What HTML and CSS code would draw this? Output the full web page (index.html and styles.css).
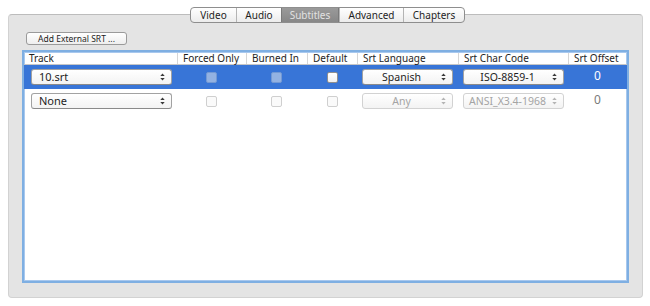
FILE: index.html
```html
<!DOCTYPE html>
<html lang="en">
<head>
    <meta charset="UTF-8">
    <title>Subtitles</title>
    <link rel="stylesheet" href="styles.css">
</head>
<body>
    <div class="page">
        <div class="panel">
            <div class="tabs">
                <div class="tab tab-video">Video</div>
                <div class="tab tab-audio">Audio</div>
                <div class="tab tab-subs selected">Subtitles</div>
                <div class="tab tab-adv">Advanced</div>
                <div class="tab tab-chap">Chapters</div>
            </div>

            <div class="button">Add External SRT ...</div>

            <div class="table">
                <div class="row header">
                    <div class="hcell first">Track</div>
                    <div class="hcell">Forced Only</div>
                    <div class="hcell">Burned In</div>
                    <div class="hcell">Default</div>
                    <div class="hcell">Srt Language</div>
                    <div class="hcell">Srt Char Code</div>
                    <div class="hcell">Srt Offset</div>
                </div>

                <div class="row selected-row">
                    <div class="cell">
                        <div class="popup popup-track">
                            <span class="label">10.srt</span>
                            <svg class="arrows" width="5" height="8" viewBox="0 0 5 8"><polygon points="0.3,3 2.5,0.4 4.7,3"/><polygon points="0.3,5 2.5,7.6 4.7,5"/></svg>
                        </div>
                    </div>
                    <div class="cell center"><span class="check check-dim"></span></div>
                    <div class="cell center"><span class="check check-dim"></span></div>
                    <div class="cell center"><span class="check"></span></div>
                    <div class="cell">
                        <div class="popup popup-lang">
                            <span class="label centered">Spanish</span>
                            <svg class="arrows" width="5" height="8" viewBox="0 0 5 8"><polygon points="0.3,3 2.5,0.4 4.7,3"/><polygon points="0.3,5 2.5,7.6 4.7,5"/></svg>
                        </div>
                    </div>
                    <div class="cell">
                        <div class="popup popup-code">
                            <span class="label centered">ISO-8859-1</span>
                            <svg class="arrows" width="5" height="8" viewBox="0 0 5 8"><polygon points="0.3,3 2.5,0.4 4.7,3"/><polygon points="0.3,5 2.5,7.6 4.7,5"/></svg>
                        </div>
                    </div>
                    <div class="cell offset">0</div>
                </div>

                <div class="row">
                    <div class="cell">
                        <div class="popup popup-track">
                            <span class="label">None</span>
                            <svg class="arrows" width="5" height="8" viewBox="0 0 5 8"><polygon points="0.3,3 2.5,0.4 4.7,3"/><polygon points="0.3,5 2.5,7.6 4.7,5"/></svg>
                        </div>
                    </div>
                    <div class="cell center"><span class="check check-off"></span></div>
                    <div class="cell center"><span class="check check-off"></span></div>
                    <div class="cell center"><span class="check check-off"></span></div>
                    <div class="cell">
                        <div class="popup popup-lang disabled">
                            <span class="label centered">Any</span>
                            <svg class="arrows" width="5" height="8" viewBox="0 0 5 8"><polygon points="0.3,3 2.5,0.4 4.7,3"/><polygon points="0.3,5 2.5,7.6 4.7,5"/></svg>
                        </div>
                    </div>
                    <div class="cell">
                        <div class="popup popup-code disabled">
                            <span class="label centered">ANSI_X3.4-1968</span>
                            <svg class="arrows" width="5" height="8" viewBox="0 0 5 8"><polygon points="0.3,3 2.5,0.4 4.7,3"/><polygon points="0.3,5 2.5,7.6 4.7,5"/></svg>
                        </div>
                    </div>
                    <div class="cell offset dim">0</div>
                </div>
            </div>
        </div>
    </div>
</body>
</html>
```

FILE: styles.css
```css
body {
    margin: 0;
    background: #ffffff;
    font-family: "Noto Sans", "DejaVu Sans", sans-serif;
    color: #1e1e1e;
}
.page {
    padding: 14px 7px 0 8px;
}
.panel {
    width: 635px;
    height: 284px;
    box-sizing: border-box;
    background: #e4e4e4;
    border: 1px solid #d2d2d2;
    border-top-color: #bcbcbc;
    border-radius: 4px;
}

/* segmented tab control */
.tabs {
    display: flex;
    margin: -8px 0 0 181px;
    width: 275px;
    height: 16px;
    box-sizing: border-box;
    border: 1px solid #8e8e8e;
    border-radius: 4px;
    background: linear-gradient(#ffffff, #ececec);
    overflow: hidden;
}
.tab {
    font-size: 10px;
    line-height: 14px;
    text-align: center;
    border-left: 1px solid #b4b4b4;
    box-sizing: border-box;
}
.tab-video { width: 45px; border-left: none; }
.tab-audio { width: 45px; }
.tab-subs { width: 58px; }
.tab-adv { width: 64px; }
.tab-chap { flex: 1; }
.tab.selected {
    background: linear-gradient(#9a9a9a, #878787);
    color: #e2e2e2;
    border-left-color: #7a7a7a;
    border-right: 1px solid #7a7a7a;
}

.button {
    margin: 9px 0 0 17px;
    width: 101px;
    height: 13px;
    box-sizing: border-box;
    border: 1px solid #9a9a9a;
    border-radius: 3px;
    background: linear-gradient(#ffffff, #eeeeee);
    font-size: 8.5px;
    line-height: 11px;
    text-align: center;
}

/* track table */
.table {
    margin: 5px 0 0 13px;
    width: 607px;
    height: 233px;
    box-sizing: border-box;
    border: 2px solid #7fafe2;
    box-shadow: inset 0 0 0 1px #a8c8ee;
    background: #ffffff;
}
.row {
    display: grid;
    grid-template-columns: 153px 69px 61px 50px 101px 110px 59px;
    height: 24px;
}
.header {
    height: 13px;
    box-sizing: border-box;
    padding-top: 1px;
    border-bottom: 1px solid #c6c6c6;
}
.hcell {
    font-size: 10px;
    line-height: 11px;
    padding-left: 5px;
    border-left: 1px solid #d6d6d6;
    white-space: nowrap;
}
.hcell.first { border-left: none; padding-left: 5px; }
.selected-row {
    background: #3875d7;
}
.cell {
    display: flex;
    align-items: center;
}
.cell.center {
    justify-content: center;
}

.popup {
    display: flex;
    align-items: center;
    height: 16px;
    box-sizing: border-box;
    border: 1px solid #a2a2a2;
    border-bottom-color: #8a8a8a;
    border-radius: 3px;
    background: linear-gradient(#ffffff, #f3f3f3);
    font-size: 10.5px;
    line-height: 14px;
    white-space: nowrap;
}
.popup-track { flex: 1; margin: 0 5px 0 7px; font-size: 11px; }
.popup-lang { flex: 1; margin: 0 5px; }
.popup-code { flex: 1; margin: 0 4px 0 5px; }
.label {
    flex: 1;
    padding-left: 7px;
}
.label.centered {
    text-align: center;
    padding-left: 3px;
}
.arrows {
    margin: 0 6px 0 4px;
    fill: #3a3a3a;
}
.popup.disabled {
    border-color: #d2d2d2;
    color: #a4a4a4;
}
.popup.disabled .arrows {
    fill: #b4b4b4;
}

.check {
    width: 11px;
    height: 11px;
    box-sizing: border-box;
    border: 1px solid #8f8f8f;
    border-radius: 2px;
    background: linear-gradient(#ffffff, #f0f0f0);
}
.check-dim {
    border-color: #7399d4;
    background: #93b2e2;
}
.check-off {
    border-color: #cfcfcf;
    background: #fafafa;
}

.offset {
    justify-content: center;
    align-items: flex-start;
    padding-top: 4px;
    font-size: 12px;
    line-height: 14px;
    color: #ffffff;
}
.offset.dim {
    color: #7a7a7a;
}
```
